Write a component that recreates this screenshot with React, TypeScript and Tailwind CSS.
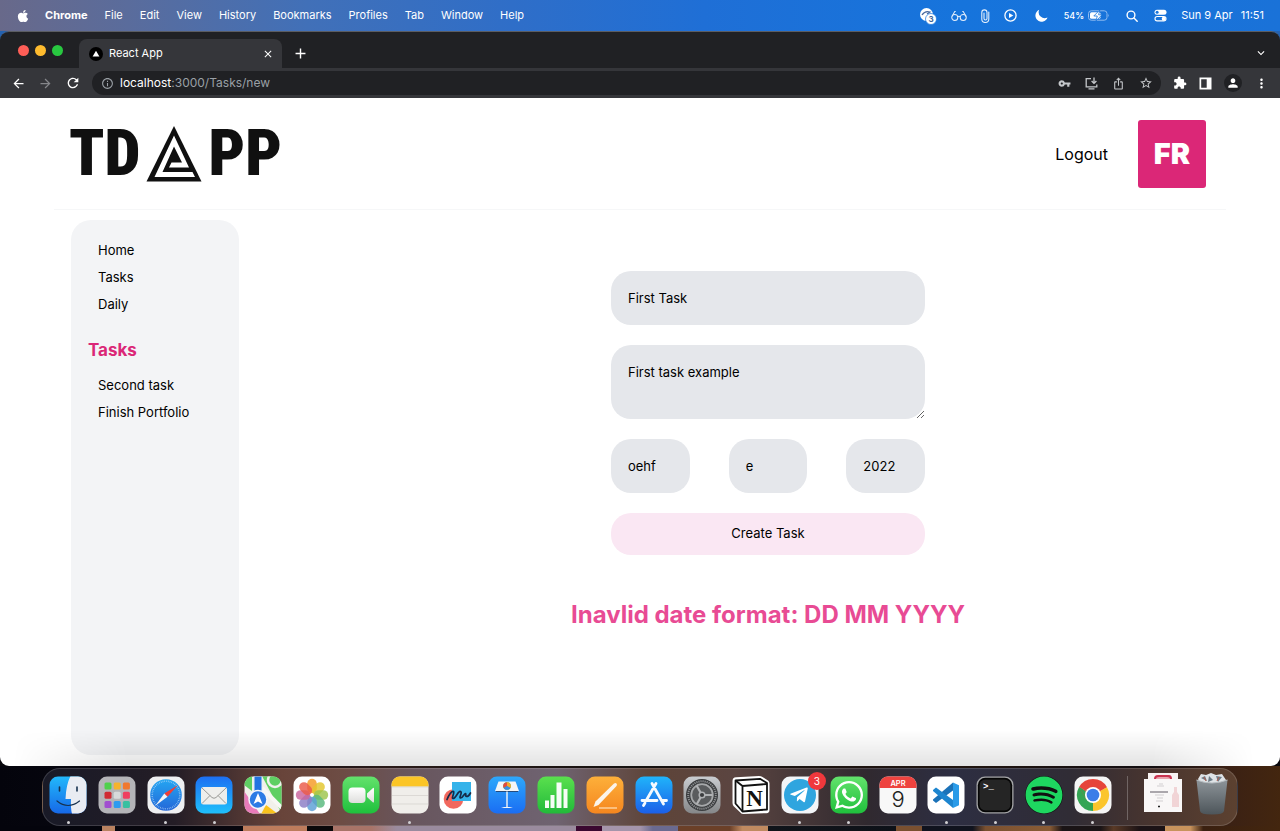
import { useState, type ReactNode } from "react";
import {
  MdAdd,
  MdArrowBack,
  MdArrowForward,
  MdClose,
  MdExtension,
  MdInfoOutline,
  MdIosShare,
  MdKeyboardArrowDown,
  MdMoreVert,
  MdPerson,
  MdRefresh,
  MdStarBorder,
  MdVpnKey,
} from "react-icons/md";
import { FaApple, FaSpotify, FaTelegramPlane, FaWhatsapp } from "react-icons/fa";

const menus = ["File", "Edit", "View", "History", "Bookmarks", "Profiles", "Tab", "Window", "Help"];

function MenuBar() {
  return (
    <header className="flex h-[31px] shrink-0 items-center justify-between bg-[linear-gradient(90deg,#68698a_0%,#5a6c9c_10%,#4170b8_24%,#2f6ec8_40%,#1f6fd6_55%,#1674dc_75%,#1a72d8_100%)] px-4 text-[11px] text-white">
      <nav className="flex items-center gap-[17px]">
        <FaApple className="-mr-[2px] size-[14px]" />
        <span className="font-bold">Chrome</span>
        {menus.map((m) => (
          <span key={m}>{m}</span>
        ))}
      </nav>
      <div className="flex items-center">
        <svg className="mr-[14px] size-[18px]" viewBox="0 0 18 18">
          <circle cx="7.5" cy="7.5" r="6.5" fill="#fff" />
          <path d="M3 8c2-3 5-4 8-3l-3 2" fill="none" stroke="#47699f" strokeWidth="1.3" />
          <circle cx="12" cy="12" r="5.5" fill="#fff" stroke="#1674dc" strokeWidth=".7" />
          <text x="12" y="15" textAnchor="middle" fontSize="8" fontWeight="700" fill="#3d6396">3</text>
        </svg>
        <svg className="mr-[14px] h-[12px] w-[16px]" viewBox="0 0 17 12" fill="none" stroke="#e3eefb" strokeWidth="1.1">
          <circle cx="4" cy="7.5" r="3.2" />
          <circle cx="13" cy="7.500" r="3.200" />
          <path d="M7.200 7q1.300-1.300 2.600 0M1 6.500 4 1.200h1M16 6.500 13 1.200h-1" />
        </svg>
        <svg className="mr-[14px] h-[14px] w-[9px]" viewBox="0 0 9 14" fill="none" stroke="#e3eefb" strokeWidth="1.100" strokeLinecap="round">
          <path d="M3 4v5.500a1.500 1.500 0 0 0 3 0V3.500a2.600 2.600 0 0 0-5.200 0V10a3.500 3.500 0 0 0 7 0V3" />
        </svg>
        <svg className="mr-[18px] size-[13px]" viewBox="0 0 13 13">
          <circle cx="6.500" cy="6.500" r="5.600" fill="none" stroke="#fff" strokeWidth="1.300" />
          <path d="M5 3.900 9.300 6.500 5 9.100z" fill="#fff" />
        </svg>
        <svg className="mr-4 size-[13px]" viewBox="0 0 13 13">
          <path d="M4.200.8A6.200 6.200 0 1 0 12.500 8.500 6 6 0 0 1 4.200.8z" fill="#fff" />
        </svg>
        <span className="mr-1 text-[9px] font-medium">54%</span>
        <svg className="mr-4 h-[11px] w-[22px]" viewBox="0 0 22 11">
          <rect x=".5" y=".8" width="18.500" height="9.400" rx="2.800" fill="none" stroke="#8fbbf0" />
          <rect x="2" y="2.200" width="10.500" height="6.600" rx="1.500" fill="#fff" />
          <path d="M20.300 3.800q1.400 1.700 0 3.400z" fill="#8fbbf0" />
          <path d="M11.800 0 5.800 6h3.500L8 11l6-6.200h-3.400z" fill="#fff" stroke="#1674dc" strokeWidth=".8" />
        </svg>
        <svg className="mr-4 size-[12px]" viewBox="0 0 12 12" fill="none" stroke="#fff" strokeWidth="1.400" strokeLinecap="round">
          <circle cx="5" cy="5" r="3.900" />
          <path d="m8 8 3.200 3.200" />
        </svg>
        <svg className="mr-[14px] size-[13px]" viewBox="0 0 13 13">
          <rect x=".5" y=".8" width="12" height="5" rx="2.500" fill="#fff" />
          <circle cx="3.100" cy="3.300" r="1.500" fill="#1674dc" />
          <rect x="1" y="7.500" width="11" height="4.400" rx="2.200" fill="none" stroke="#fff" strokeWidth="1.100" />
          <circle cx="9.700" cy="9.700" r="2" fill="#fff" />
        </svg>
        <span>Sun 9 Apr</span>
        <span className="ml-2">11:51</span>
      </div>
    </header>
  );
}

function TabStrip() {
  return (
    <div className="flex h-9 items-end bg-[#202124]">
      <div className="flex h-9 w-[79px] items-center gap-[6px] pl-[18px]">
        <span className="size-[11px] rounded-full bg-[#fe5e57]" />
        <span className="size-[11px] rounded-full bg-[#febb2e]" />
        <span className="size-[11px] rounded-full bg-[#28c840]" />
      </div>
      <div className="flex h-[29px] w-[203px] items-center rounded-t-lg bg-[#35363a] pr-2 pl-[10px] text-white">
        <svg className="mr-[6px] size-[14px]" viewBox="0 0 14 14">
          <circle cx="7" cy="7" r="7" fill="#000" />
          <path d="m7 3.800 3.400 5.800H3.600z" fill="#fff" />
        </svg>
        <span className="flex-1 text-[11px]">React App</span>
        <button aria-label="Close tab">
          <MdClose className="size-[12px]" />
        </button>
      </div>
      <button aria-label="New tab" className="mb-[6px] ml-[10px] text-white">
        <MdAdd className="size-[17px]" />
      </button>
      <button aria-label="Search tabs" className="mr-3 mb-2 ml-auto text-white">
        <MdKeyboardArrowDown className="size-[14px]" />
      </button>
    </div>
  );
}

function Toolbar() {
  return (
    <div className="flex h-[30px] items-center bg-[#35363a] px-[11px] text-white">
      <button aria-label="Back">
        <MdArrowBack className="size-[15px]" />
      </button>
      <button aria-label="Forward" className="ml-3 text-[#85868a]">
        <MdArrowForward className="size-[15px]" />
      </button>
      <button aria-label="Reload" className="ml-3">
        <MdRefresh className="size-[16px]" />
      </button>
      <div className="ml-[11px] flex h-6 flex-1 items-center rounded-full bg-[#202124] pr-2 pl-[9px] text-[#c4c7ca]">
        <MdInfoOutline className="mr-[6px] size-[13px] text-[#9aa0a6]" />
        <span className="flex-1 text-[12px] text-[#9aa0a6]">
          <span className="text-white">localhost</span>:3000/Tasks/new
        </span>
        <div className="flex items-center gap-[14px]">
          <MdVpnKey className="size-[13px]" />
          <svg className="size-[13px]" viewBox="0 0 13 13" fill="none" stroke="currentColor" strokeWidth="1.300">
            <path d="M6 1.600H1.200v8.200h10.600V7.600M3.500 11.800h6M9 .5v5.700M6.600 4 9 6.400 11.400 4" />
          </svg>
          <MdIosShare className="size-[13px]" />
          <MdStarBorder className="size-[14px]" />
        </div>
      </div>
      <div className="ml-3 flex items-center gap-[12px]">
        <MdExtension className="size-[14px]" />
        <svg className="size-[13px]" viewBox="0 0 13 13">
          <path d="M.5.5h12v12H.5zM2.200 2.200v8.600h5.500V2.200z" fill="#fff" fillRule="evenodd" />
        </svg>
        <span className="flex size-[18px] items-center justify-center rounded-full bg-[#202124]">
          <MdPerson className="size-[14px]" />
        </span>
        <MdMoreVert className="size-[15px]" />
      </div>
    </div>
  );
}

function Logo() {
  return (
    <a
      href="#home"
      aria-label="TDAPP"
      className="flex items-center font-['Roboto_Condensed','Open_Sans_Condensed','Noto_Sans_Condensed','Lato',sans-serif] text-[64px] leading-[68px] font-black text-[#101010]"
    >
      <span>TD</span>
      <svg className="mx-[6px] size-[56px]" viewBox="0 0 56 56">
        <path fill="#101010" d="M28 0 55.500 55.500H.5z" />
        <path fill="#fff" d="M28 9.500 8.500 51H49L46.500 46H16.500L28 20.500l8 16H25.500L23 41.500H43z" />
      </svg>
      <span>PP</span>
    </a>
  );
}

function SideLink({ children }: { children: ReactNode }) {
  return (
    <a href="#tasks" className="block pl-[27px] text-[13px] leading-[27px]">
      {children}
    </a>
  );
}

const fieldClass =
  "block w-full rounded-[20px] bg-[#e5e7eb] p-[17px] text-[13px] leading-[20px] text-black outline-none";

function TaskForm() {
  const [title, setTitle] = useState("First Task");
  const [details, setDetails] = useState("First task example");
  const [date, setDate] = useState({ day: "oehf", month: "e", year: "2022" });
  const parts = ["day", "month", "year"] as const;
  return (
    <main className="flex flex-1 flex-col items-center pt-[51px] pl-[71px]">
      <form className="flex w-[314px] flex-col gap-[20px]" onSubmit={(e) => e.preventDefault()}>
        <input aria-label="Title" className={fieldClass} value={title} onChange={(e) => setTitle(e.target.value)} />
        <textarea
          aria-label="Description"
          rows={2}
          className={fieldClass}
          value={details}
          onChange={(e) => setDetails(e.target.value)}
        />
        <div className="grid grid-cols-3 gap-[39px]">
          {parts.map((p) => (
            <input
              key={p}
              aria-label={p}
              className={fieldClass}
              value={date[p]}
              onChange={(e) => setDate({ ...date, [p]: e.target.value })}
            />
          ))}
        </div>
        <button className="h-[42px] rounded-[20px] bg-[#fae7f3] text-[13px] text-black">Create Task</button>
      </form>
      <p className="mt-[42px] text-[24px] leading-[36px] font-bold text-[#e84b94]">Inavlid date format: DD MM YYYY</p>
    </main>
  );
}

function TaskApp() {
  return (
    <div className="relative flex flex-1 flex-col bg-white px-[54px] pb-[11px] text-black">
      <div className="flex h-[112px] items-center justify-between border-b border-[#f6f7f8] pr-5 pl-[15px]">
        <Logo />
        <div className="flex items-center gap-[30px]">
          <a href="#logout" className="text-[16px]">Logout</a>
          <div className="flex size-[68px] items-center justify-center rounded-[3px] bg-[#db2777] text-[29px] font-black text-white">
            FR
          </div>
        </div>
      </div>
      <div className="flex flex-1 pt-[10px] pl-[17px]">
        <aside className="w-[168px] shrink-0 rounded-[20px] bg-[#f3f4f6] pt-[17px]">
          <SideLink>Home</SideLink>
          <SideLink>Tasks</SideLink>
          <SideLink>Daily</SideLink>
          <h2 className="mt-[18px] mb-[8px] pl-[17px] text-[17px] leading-[28px] font-bold text-[#db2777]">Tasks</h2>
          <SideLink>Second task</SideLink>
          <SideLink>Finish Portfolio</SideLink>
        </aside>
        <TaskForm />
      </div>
      <div className="pointer-events-none absolute inset-x-0 bottom-0 h-9 bg-[linear-gradient(0deg,rgba(0,0,0,0.11),rgba(0,0,0,0))] [mask-image:linear-gradient(90deg,transparent_1%,#000_10%,#000_90%,transparent_98%)]" />
    </div>
  );
}

function Tile({ fill, children }: { fill: string; children?: ReactNode }) {
  return (
    <svg className="size-[38px]" viewBox="0 0 38 38">
      <rect x=".5" y=".5" width="37" height="37" rx="8.500" fill={fill} />
      {children}
    </svg>
  );
}

function Gradients() {
  const list: [string, string, string][] = [
    ["g-blue", "#1d6ff2", "#1fc0fb"],
    ["g-finder", "#22b8fb", "#1668e8"],
    ["g-green", "#63e26c", "#1fc03c"],
    ["g-numbers", "#5ae04e", "#22b93a"],
    ["g-orange", "#fdb03a", "#f5861f"],
    ["g-keynote", "#2da8fb", "#1a6df3"],
    ["g-store", "#20b4fa", "#1b5fe8"],
    ["g-grey", "#c9ccd0", "#858789"],
    ["g-bin", "#8d9499", "#4d555a"],
    ["g-safari", "#24a6f2", "#2467d8"],
    ["g-paper", "#ffffff", "#dededc"],
  ];
  return (
    <svg className="absolute size-0" aria-hidden="true">
      <defs>
        {list.map(([id, a, b]) => (
          <linearGradient key={id} id={id} x1="0" y1="0" x2="0" y2="1">
            <stop offset="0" stopColor={a} />
            <stop offset="1" stopColor={b} />
          </linearGradient>
        ))}
        <clipPath id="tile">
          <rect x=".5" y=".5" width="37" height="37" rx="8.500" />
        </clipPath>
      </defs>
    </svg>
  );
}

const launchpad = ["#4fd04c", "#f6b32e", "#f0782e", "#d02b34", "#d7d9db", "#ef3f5f", "#a14fd0", "#2d9bf0", "#38c0a0"];
const petals = ["#f59a23", "#e3c62c", "#9ec54a", "#58b87c", "#5a9fd6", "#8a7cc4", "#c9649d", "#ea5a48"];

const apps: { name: string; open?: boolean; icon: ReactNode }[] = [
  {
    name: "Finder",
    open: true,
    icon: (
      <Tile fill="url(#g-finder)">
        <path clipPath="url(#tile)" d="M21.500 0H38v38H23q-1.500-6-1-15h-5.500Q17 9 21.500 0z" fill="#e9ecf2" />
        <path d="M10.500 11v4M28 11v4" stroke="#17324f" strokeWidth="1.600" strokeLinecap="round" />
        <path d="M8 25q11 9 22.500 0" fill="none" stroke="#17324f" strokeWidth="1.200" strokeLinecap="round" />
      </Tile>
    ),
  },
  {
    name: "Launchpad",
    icon: (
      <Tile fill="#b4b4b8">
        {launchpad.map((c, i) => (
          <rect key={c} x={6.5 + (i % 3) * 9.2} y={6.5 + Math.floor(i / 3) * 9.2} width="7" height="7" rx="1.500" fill={c} />
        ))}
      </Tile>
    ),
  },
  {
    name: "Safari",
    open: true,
    icon: (
      <Tile fill="#eeeff1">
        <circle cx="19" cy="19" r="15.800" fill="url(#g-safari)" />
        <circle cx="19" cy="19" r="13.800" fill="none" stroke="#a9d3f8" strokeWidth="1.600" strokeDasharray=".6 1.200" />
        <path d="M31 9 20.500 20.800l-3.200-3.200z" fill="#ef3e37" />
        <path d="m8 30 9.300-12.400 3.200 3.200z" fill="#f4f4f4" />
      </Tile>
    ),
  },
  {
    name: "Mail",
    open: true,
    icon: (
      <Tile fill="url(#g-blue)">
        <rect x="6" y="11" width="26" height="17.500" rx="2.500" fill="#eeeeec" />
        <path d="m7 12 10 9.500q2 1.500 4 0L31 12M7 27.500l8-8M31 27.500l-8-8" fill="none" stroke="#8f8f8b" strokeWidth=".9" />
      </Tile>
    ),
  },
  {
    name: "Maps",
    icon: (
      <Tile fill="#f1f0ea">
        <g clipPath="url(#tile)">
          <path d="M18 0h20v38z" fill="#5fcf63" />
          <path d="M0 0h8v15l-8-6z" fill="#5fcf63" />
          <path d="M0 15 16 38H0z" fill="#e87bb9" />
          <path d="m17 38 5-9 12 9z" fill="#f9c21d" />
          <path d="m18 12 22 22" stroke="#f7f7f4" strokeWidth="4" />
          <circle cx="31" cy="4" r="7" fill="none" stroke="#f1f1ef" strokeWidth="2.500" />
          <path d="M10 0h8v24h-8z" fill="#2374e1" stroke="#e5edf6" />
        </g>
        <circle cx="14" cy="23.500" r="9" fill="#2c7be5" stroke="#f4f6fa" strokeWidth="1.500" />
        <path d="m14 17 4.500 11-4.500-2.500L9.500 28z" fill="#fff" />
      </Tile>
    ),
  },
  {
    name: "Photos",
    icon: (
      <Tile fill="#fff">
        {petals.map((c, i) => (
          <rect key={c} x="14.200" y="2.800" width="9.600" height="14.400" rx="4.800" fill={c} fillOpacity=".82" transform={`rotate(${i * 45} 19 19)`} />
        ))}
      </Tile>
    ),
  },
  {
    name: "FaceTime",
    icon: (
      <Tile fill="url(#g-green)">
        <rect x="6.500" y="11.500" width="17" height="15.500" rx="4" fill="url(#g-paper)" />
        <path d="M25 17.500 31 12q1-.5 1 .8v13q0 1.200-1 .6L25 21z" fill="url(#g-paper)" />
      </Tile>
    ),
  },
  {
    name: "Notes",
    open: true,
    icon: (
      <Tile fill="#f0eeea">
        <path clipPath="url(#tile)" d="M0 0h38v10.500H0z" fill="#fbc526" />
        <path d="M1 11h36M1 19.500h36M1 28h36" stroke="#d2d0cc" strokeWidth=".7" />
      </Tile>
    ),
  },
  {
    name: "Freeform",
    icon: (
      <Tile fill="#fff">
        <circle cx="14.500" cy="23" r="9.800" fill="#f1685e" />
        <path d="M13 6h19v19H13z" fill="#35b3ea" />
        <path d="M8 23.500c2-5 5-9 6.500-8s-2.500 7-.5 7c3 0 5-8 7.500-7s-2 6 0 6.500 4-5 5-4.500-.5 3 1 3 3-1.500 4-3.500" fill="none" stroke="#162a48" strokeWidth="1.700" strokeLinecap="round" />
      </Tile>
    ),
  },
  {
    name: "Keynote",
    icon: (
      <Tile fill="url(#g-keynote)">
        <path d="M10.500 5.500h17l3.500 9.500H7z" fill="#f4f5f6" />
        <path d="M8 15.500h22" stroke="#254b7c" />
        <circle cx="19" cy="10" r="3.800" fill="#48b85b" />
        <path d="M19 10V6.200a3.800 3.800 0 0 1 3.300 5.700z" fill="#f4a52c" />
        <path d="M19 10 15.700 12a3.800 3.800 0 0 1 3.300-5.800z" fill="#e5493f" />
        <path d="m19 10 3.300 1.900a3.800 3.800 0 0 1-6.600.1z" fill="#3d8be4" />
        <path d="M18.300 15.500h1.400V31h-1.400zM13 32q6-2.500 12 0z" fill="#f4f5f6" />
      </Tile>
    ),
  },
  {
    name: "Numbers",
    icon: (
      <Tile fill="url(#g-numbers)">
        <path d="M8 24.500h4V32H8zM13.500 19h4v13h-4zM19.500 6.500h5V32h-5zM26.500 13h4v19h-4z" fill="#f6fdf5" />
      </Tile>
    ),
  },
  {
    name: "Pages",
    icon: (
      <Tile fill="url(#g-orange)">
        <path d="m7.500 31 2-5.500L28 7.500q1.500-1 2.500 0t0 2.500L12.500 29z" fill="#fbf4ea" />
        <path d="M13 32h18" stroke="#ffe1ba" strokeWidth="1.200" />
      </Tile>
    ),
  },
  {
    name: "App Store",
    icon: (
      <Tile fill="url(#g-store)">
        <path d="M17 7.500 28.500 28M21 7.500 11.500 24M7 24.500h15M27 24.500h4.500M10 27l-1.500 2.500" fill="none" stroke="#f5faff" strokeWidth="2.800" strokeLinecap="round" />
      </Tile>
    ),
  },
  {
    name: "System Settings",
    icon: (
      <Tile fill="url(#g-grey)">
        <circle cx="19" cy="19" r="16" fill="#3a3c3e" />
        <circle cx="19" cy="19" r="13.800" fill="none" stroke="#8e9093" strokeWidth="2" strokeDasharray="1.200 .9" />
        <circle cx="19" cy="19" r="10.800" fill="#5a5c5e" stroke="#a6a8aa" strokeWidth="1.800" />
        <path d="M19 19h10.500M19 19l-5.300-9.200M19 19l-5.300 9.200" stroke="#b0b2b4" strokeWidth="2.200" />
        <circle cx="19" cy="19" r="2.800" fill="#3a3c3e" stroke="#b0b2b4" strokeWidth="1.500" />
      </Tile>
    ),
  },
  {
    name: "Notion",
    icon: (
      <svg className="size-[38px]" viewBox="0 0 38 38">
        <path d="M.5 5Q.500 1.500 4 1.300L27 0q2 0 3.500 1L36 4.500q1.500 1 1.500 3V34q0 3-3 3.200l-23 .8q-2 0-3.200-1.500L1.500 30Q.500 28.500.5 27z" fill="#fff" />
        <path d="M3.500 4.500 28 2.800 35 7v26.500L10.500 35.500l-7-8z" fill="#fff" stroke="#111" strokeWidth="1.800" strokeLinejoin="round" />
        <path d="m3.500 4.500 7 5.500L35 8M10.500 9.500v26" fill="none" stroke="#111" strokeWidth="1.800" />
        <text x="22.500" y="29.500" textAnchor="middle" fontFamily="Liberation Serif, serif" fontWeight="700" fontSize="23" fill="#111">N</text>
      </svg>
    ),
  },
  {
    name: "Telegram",
    open: true,
    icon: (
      <span className="relative block">
        <Tile fill="#f2f5f8">
          <circle cx="19" cy="19" r="16" fill="#2fa5df" />
        </Tile>
        <FaTelegramPlane className="absolute top-[9px] left-[8px] size-[20px] text-white" />
        <span className="absolute -top-1 -right-[7px] flex size-[18px] items-center justify-center rounded-full bg-[#f0383c] text-[10px] text-white">3</span>
      </span>
    ),
  },
  {
    name: "WhatsApp",
    open: true,
    icon: (
      <span className="relative block">
        <Tile fill="url(#g-green)" />
        <FaWhatsapp className="absolute top-[3px] left-[3px] size-8 text-white" />
      </span>
    ),
  },
  {
    name: "Calendar",
    icon: (
      <Tile fill="#f8f8f8">
        <path clipPath="url(#tile)" d="M0 0h38v12H0z" fill="#ee433f" />
        <text x="19" y="9.500" textAnchor="middle" fontSize="7.500" fontWeight="600" fill="#fff">APR</text>
        <text x="19" y="31" textAnchor="middle" fontSize="22" fontWeight="300" fill="#222">9</text>
      </Tile>
    ),
  },
  {
    name: "Visual Studio Code",
    open: true,
    icon: (
      <Tile fill="#fff">
        <path d="m26 6.500 6 2.800v20L26 32z" fill="#2a9be8" />
        <path d="M26 6.500v8L9 27l-3-2.500v-1z" fill="#1b72b8" />
        <path d="M26 32v-8L9 11.500 6 14v1z" fill="#1d85cf" />
      </Tile>
    ),
  },
  {
    name: "Terminal",
    open: true,
    icon: (
      <Tile fill="#a5a6a8">
        <rect x="1.800" y="1.800" width="34.400" height="34.400" rx="7.500" fill="#050505" />
        <rect x="3.500" y="3.500" width="31" height="31" rx="6" fill="#252525" />
        <text x="7" y="13" fontFamily="Liberation Mono, monospace" fontWeight="700" fontSize="9" fill="#fff">&gt;_</text>
      </Tile>
    ),
  },
  {
    name: "Spotify",
    open: true,
    icon: (
      <span className="block size-[38px] rounded-full bg-[#111]">
        <FaSpotify className="size-[38px] text-[#1ed760]" />
      </span>
    ),
  },
  {
    name: "Google Chrome",
    open: true,
    icon: (
      <Tile fill="#f5f5f5">
        <path d="M19 19 5.100 11A16 16 0 0 1 32.900 11z" fill="#e6443a" />
        <path d="M19 19 32.900 11A16 16 0 0 1 19 35z" fill="#fbc52c" />
        <path d="M19 19v16A16 16 0 0 1 5.100 11z" fill="#35a554" />
        <path d="M19 11h13.900L19 19zM12 23 5.100 11 19 19z" fill="#e6443a" />
        <path d="m12 23-6.900-12L17 19z" fill="#35a554" />
        <path d="m26 23-7 12v-12z" fill="#fbc52c" />
        <circle cx="19" cy="19" r="8" fill="#fff" />
        <circle cx="19" cy="19" r="6.300" fill="#3c7de8" />
      </Tile>
    ),
  },
];

function Dock() {
  return (
    <footer className="shrink-0 bg-[linear-gradient(90deg,#04040c_0%,#0b0a14_18%,#2a1a18_30%,#15110f_50%,#20140f_75%,#120d10_90%,#3b2114_96%,#43260f_100%)] pt-[2px]">
      <div className="px-[42px]">
        <div className="flex h-[58px] items-start rounded-[18px] border border-white/15 bg-[linear-gradient(90deg,#191a27_0%,#241d26_11%,#68443a_20%,#6d4c44_25%,#68565e_31%,#6f6371_43%,#5e4438_51%,#5b4541_58%,#30292f_69%,#2d2e42_76%,#302c35_86%,#49352f_93%,#5c4130_100%)] pt-[7px] pr-[8px] pl-[6px]">
          <div className="flex flex-1 justify-between">
            {apps.map((app) => (
              <div key={app.name} title={app.name} className="flex flex-col items-center gap-[7px]">
                {app.icon}
                {app.open && <span className="size-[3px] rounded-full bg-[#d0cfd2]" />}
              </div>
            ))}
          </div>
          <span className="mx-[15px] h-11 w-px bg-white/25" />
          <svg className="-mt-1 h-[42px] w-[40px]" viewBox="0 0 40 42">
            <path d="M5 1h30v38H5z" fill="#f7f3f3" />
            <path d="M11 7q0-4 4-4h11q3 0 3 4z" fill="#c93450" />
            <path d="M13 7q0-2 3-2h8q3 0 3 2z" fill="#e9a5ae" />
            <path d="M1 7h38v33H1z" fill="#f9f7f7" />
            <path d="M16 12h4M14 14h7M12 23h9M14 26h6M13 29h7" stroke="#c2bdc0" strokeWidth=".7" />
            <path d="M7 20h18" stroke="#77727a" strokeWidth="1.200" />
            <path d="M31 15h3v5l2 3v12h-7V23l2-3z" fill="#f1d4d6" />
            <path d="M15 34.500h2" stroke="#222" strokeWidth="1.500" />
          </svg>
          <svg className="-mt-1 ml-[12px] h-[43px] w-[34px]" viewBox="0 0 34 43">
            <path d="M3 7 6 2l5 1 5-2 5 2 6-1 4 6-3 5H6z" fill="#dfe3e6" />
            <path d="m6 6 4-2 2 5zM14 4l4 4-5 2zM21 4l6 1-4 5z" fill="#6c7c87" />
            <path d="m9 5 2 4M24 5l-2 4" stroke="#b35d4d" />
            <path d="M1.500 8 5 39q.5 3.500 12 3.500T29 39l3.500-31q-15 6-31 0z" fill="url(#g-bin)" />
            <path d="M1.500 8q15 6 31 0" fill="none" stroke="#b9bfc3" />
          </svg>
        </div>
      </div>
      <div className="h-[5px] bg-[linear-gradient(90deg,#04040c_8%,#b98260_8%,#b98260_9%,#07060d_9%,#07060d_19%,#bd7c5c_19%,#bd7c5c_24%,#0a0809_24%,#0a0809_26%,#a87468_26%,#a87468_29%,#9a8b9e_31%,#9a8b9e_45%,#3a0830_45%,#3a0830_47%,#a595ab_47%,#a595ab_50%,#6a6a90_51%,#6a6a90_53%,#6b4028_53%,#6b4028_57%,#c08a60_58%,#c08a60_60%,#10141a_60%,#0d1118_70%,#7a5030_70%,#7a5030_72%,#10131e_72%,#10131e_76%,#7a5030_77%,#8a5c35_82%,#1a1416_83%,#1a1416_86%,#5a3a26_87%,#1c1316_89%,#1c1316_91%,#c8935c_91%,#c8935c_93%,#3a2010_94%,#43260f_100%)]" />
    </footer>
  );
}

export default function App() {
  return (
    <div className="flex min-h-screen flex-col bg-[#08070c] font-['Inter',sans-serif]">
      <Gradients />
      <MenuBar />
      <div className="bg-[#2462b0]">
        <div className="overflow-hidden rounded-t-[9px] border-t border-[#5b5d62]">
          <TabStrip />
          <Toolbar />
        </div>
      </div>
      <div className="flex flex-1 flex-col overflow-hidden rounded-b-[9px]">
        <TaskApp />
      </div>
      <Dock />
    </div>
  );
}
